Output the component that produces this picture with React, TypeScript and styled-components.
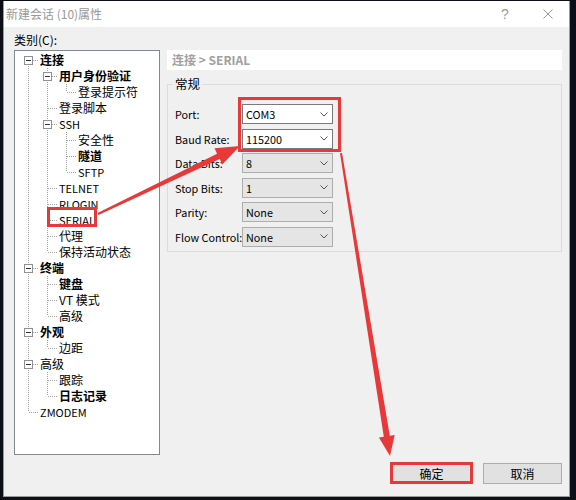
import React from 'react';
import styled, { createGlobalStyle } from 'styled-components';

const GlobalStyle = createGlobalStyle`
  html, body {
    margin: 0;
    padding: 0;
    background: #0d0f16;
  }
  body {
    font-family: "Noto Sans CJK SC", "Noto Sans", sans-serif;
    font-size: 12px;
    color: #000;
  }
  * { box-sizing: border-box; }
`;

const Desktop = styled.div`
  position: relative;
  width: 576px;
  height: 500px;
  padding: 1px 0 0 3px;
  background: #0d0f16;
  overflow: hidden;
`;

const Window = styled.div`
  width: 567px;
  height: 496px;
  display: flex;
  flex-direction: column;
  background: #f0f0f0;
  border: 1px solid #9a9a9a;
  border-top: none;
`;

const TitleBar = styled.div`
  height: 26px;
  display: flex;
  align-items: center;
  padding-left: 2px;
  background: #fff;
  color: #999;
`;

const TitleText = styled.span`
  line-height: 26px;
`;

const TitleButton = styled.div<{ $width: number }>`
  width: ${(p) => p.$width}px;
  height: 26px;
  display: flex;
  align-items: center;
  justify-content: center;
  color: #999;
  font-family: "Liberation Sans", sans-serif;
  font-size: 14px;

  &:first-of-type {
    margin-left: auto;
  }
`;

const Body = styled.div`
  flex: 1;
  display: flex;
  flex-direction: column;
  padding: 5px 7px 0 10px;
`;

const CategoryLabel = styled.div`
  line-height: 16px;
  margin-bottom: 2px;
`;

const Main = styled.div`
  display: flex;
  gap: 7px;
  height: 405px;
`;

const TreePanel = styled.div`
  width: 146px;
  height: 405px;
  background: #fff;
  border: 1px solid #828790;
  padding: 1px 0 0 4px;
  overflow: hidden;
`;

const TreeRow = styled.div`
  display: flex;
  align-items: center;
  height: 16px;
  white-space: nowrap;
`;

const TreeLabel = styled.span<{ $bold?: boolean; $latin?: boolean }>`
  padding-left: 2px;
  line-height: 16px;
  font-size: ${(p) => (p.$latin ? '11px' : '12px')};
  font-weight: ${(p) => (p.$bold ? 700 : 400)};
`;

const CellSvg = styled.svg`
  display: block;
  flex-shrink: 0;

  line.dot {
    stroke: #a0a0a0;
    stroke-width: 1;
    stroke-dasharray: 1 1;
  }
`;

const RightPane = styled.div`
  flex: 1;
  display: flex;
  flex-direction: column;
`;

const Header = styled.div`
  height: 20px;
  line-height: 20px;
  padding-left: 5px;
  background: #fff;
  color: #a0a0a0;
  font-weight: 700;
`;

const Group = styled.fieldset`
  margin: 6px 0 0;
  padding: 12px 7px 4px;
  border: 1px solid #dcdcdc;
  min-inline-size: 0;
`;

const Legend = styled.legend`
  padding: 0 2px;
  margin-left: -2px;
  line-height: 16px;
  font-size: 12.5px;
`;

const FormGrid = styled.div`
  display: grid;
  grid-template-columns: 67px 91px;
  grid-auto-rows: 20px;
  row-gap: 4.6px;
  align-items: center;
  font-size: 10.8px;
`;

const FieldLabel = styled.span`
  line-height: 20px;
  white-space: nowrap;
`;

const Select = styled.div<{ $active?: boolean }>`
  height: 20px;
  display: flex;
  align-items: center;
  justify-content: space-between;
  padding: 0 4px 0 3px;
  border: 1px solid ${(p) => (p.$active ? '#7a7a7a' : '#adadad')};
  background: ${(p) => (p.$active ? '#fff' : '#e5e5e5')};
`;

const Footer = styled.div`
  display: flex;
  justify-content: flex-end;
  gap: 12px;
  margin-top: 8px;
`;

const Button = styled.div`
  width: 79px;
  height: 21px;
  display: flex;
  align-items: center;
  justify-content: center;
  border: 1px solid #adadad;
  background: #e1e1e1;
`;

const Annotations = styled.svg`
  position: absolute;
  left: 0;
  top: 0;
  pointer-events: none;
`;

type TreeNode = { label: string; bold?: boolean; children?: TreeNode[] };

const tree: TreeNode[] = [
  {
    label: '连接',
    bold: true,
    children: [
      { label: '用户身份验证', bold: true, children: [{ label: '登录提示符' }] },
      { label: '登录脚本' },
      {
        label: 'SSH',
        children: [{ label: '安全性' }, { label: '隧道', bold: true }, { label: 'SFTP' }],
      },
      { label: 'TELNET' },
      { label: 'RLOGIN' },
      { label: 'SERIAL' },
      { label: '代理' },
      { label: '保持活动状态' },
    ],
  },
  {
    label: '终端',
    bold: true,
    children: [{ label: '键盘', bold: true }, { label: 'VT 模式' }, { label: '高级' }],
  },
  { label: '外观', bold: true, children: [{ label: '边距' }] },
  { label: '高级', children: [{ label: '跟踪' }, { label: '日志记录', bold: true }] },
  { label: 'ZMODEM' },
];

type Row = {
  label: string;
  bold?: boolean;
  guides: boolean[];
  top: boolean;
  bottom: boolean;
  box: boolean;
};

function flatten(nodes: TreeNode[], depth: number, guides: boolean[], out: Row[]) {
  nodes.forEach((n, i) => {
    const last = i === nodes.length - 1;
    out.push({
      label: n.label,
      bold: n.bold,
      guides,
      top: depth > 0 || i > 0,
      bottom: !last,
      box: !!n.children?.length,
    });
    if (n.children) flatten(n.children, depth + 1, [...guides, !last], out);
  });
  return out;
}

const rows = flatten(tree, 0, [], []);
const isLatin = (s: string) => /^[\x20-\x7e]+$/.test(s);

const Guide = ({ on }: { on: boolean }) => (
  <CellSvg width={19} height={16}>
    {on && <line className="dot" x1={9.5} y1={0} x2={9.5} y2={16} />}
  </CellSvg>
);

const Connector = ({ row }: { row: Row }) => (
  <CellSvg width={19} height={16}>
    {row.top && <line className="dot" x1={9.5} y1={0} x2={9.5} y2={8} />}
    {row.bottom && <line className="dot" x1={9.5} y1={8} x2={9.5} y2={16} />}
    <line className="dot" x1={row.box ? 14 : 10} y1={8.5} x2={19} y2={8.5} />
    {row.box && (
      <>
        <rect x={5.5} y={4.5} width={8} height={8} fill="#fff" stroke="#919191" />
        <line x1={7} y1={8.5} x2={12} y2={8.5} stroke="#333" />
      </>
    )}
  </CellSvg>
);

const fields = [
  { label: 'Port:', value: 'COM3', active: true },
  { label: 'Baud Rate:', value: '115200', active: true },
  { label: 'Data Bits:', value: '8' },
  { label: 'Stop Bits:', value: '1' },
  { label: 'Parity:', value: 'None' },
  { label: 'Flow Control:', value: 'None' },
];

const Chevron = () => (
  <svg width={8} height={5} viewBox="0 0 8 5">
    <polyline points="0.5,0.5 4,4 7.5,0.5" fill="none" stroke="#555" strokeWidth={1} />
  </svg>
);

const RED = '#e8393a';

export default function App() {
  return (
    <>
      <GlobalStyle />
      <Desktop>
        <Window>
          <TitleBar>
            <TitleText>新建会话 (10)属性</TitleText>
            <TitleButton $width={44}>?</TitleButton>
            <TitleButton $width={42}>
              <svg width={10} height={10} viewBox="0 0 10 10">
                <path d="M0.5 0.5 L9.5 9.5 M9.5 0.5 L0.5 9.5" stroke="#999" strokeWidth={1} />
              </svg>
            </TitleButton>
          </TitleBar>
          <Body>
            <CategoryLabel>类别(C):</CategoryLabel>
            <Main>
              <TreePanel>
                {rows.map((row, i) => (
                  <TreeRow key={i}>
                    {row.guides.map((g, j) => (
                      <Guide key={j} on={g} />
                    ))}
                    <Connector row={row} />
                    <TreeLabel $bold={row.bold} $latin={isLatin(row.label)}>
                      {row.label}
                    </TreeLabel>
                  </TreeRow>
                ))}
              </TreePanel>
              <RightPane>
                <Header>连接 &gt; SERIAL</Header>
                <Group>
                  <Legend>常规</Legend>
                  <FormGrid>
                    {fields.map((f) => (
                      <React.Fragment key={f.label}>
                        <FieldLabel>{f.label}</FieldLabel>
                        <Select $active={f.active}>
                          <span>{f.value}</span>
                          <Chevron />
                        </Select>
                      </React.Fragment>
                    ))}
                  </FormGrid>
                </Group>
              </RightPane>
            </Main>
            <Footer>
              <Button>确定</Button>
              <Button>取消</Button>
            </Footer>
          </Body>
        </Window>
        <Annotations width={576} height={500}>
          <g fill="none" stroke={RED} strokeWidth={3}>
            <rect x={48.5} y={208.5} width={47} height={17} />
            <rect x={239.5} y={98.5} width={100} height={52} />
            <rect x={391.5} y={463.5} width={80} height={19} />
          </g>
          <g fill={RED}>
            <polygon points="97.5,212.9 217.1,153.7 214.5,148.3 240,146 222.3,164.5 219.7,159.1 98.5,215.1" />
            <polygon points="340,153.2 383.8,436.8 378.9,437.6 390,456 394.7,435 389.8,435.8 342,152.8" />
          </g>
        </Annotations>
      </Desktop>
    </>
  );
}
